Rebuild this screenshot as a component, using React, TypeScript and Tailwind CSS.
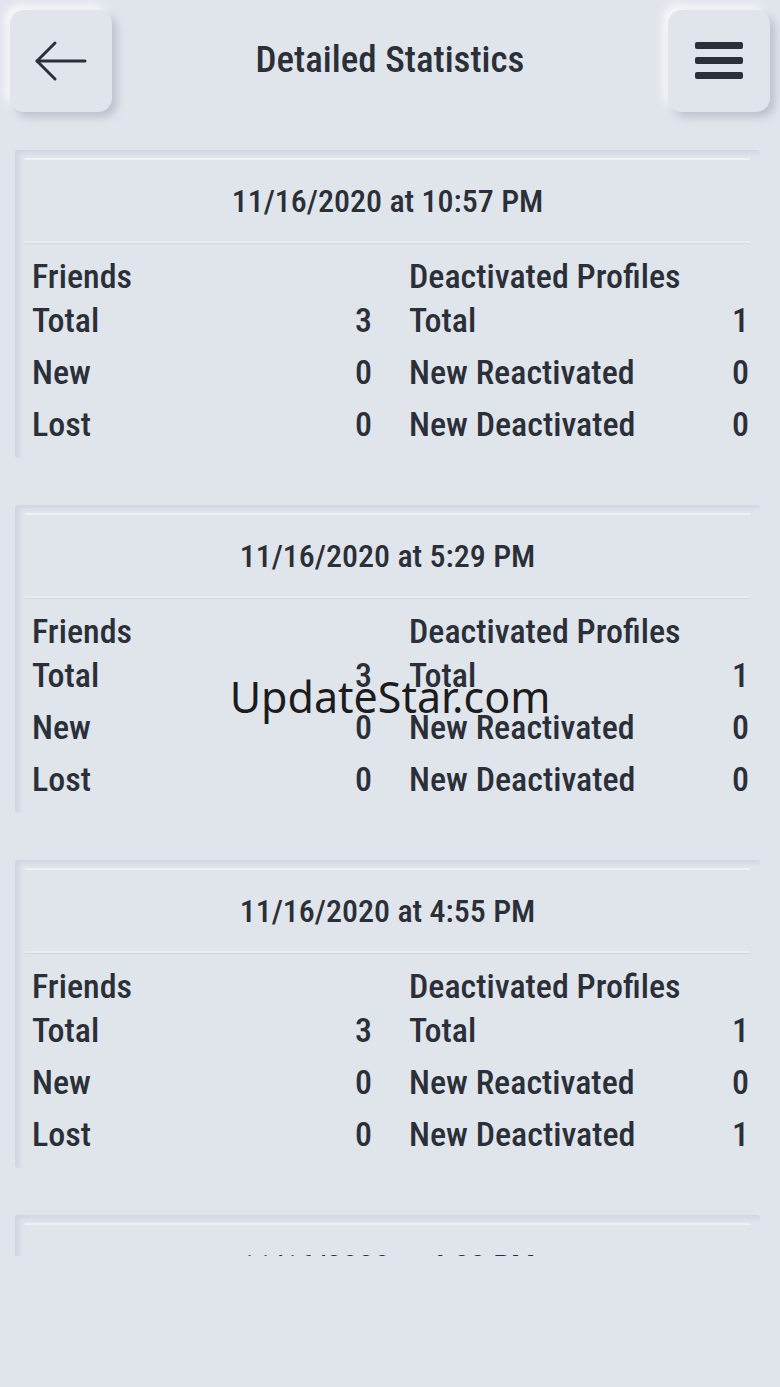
type Stat = { label: string; value: number };

type Entry = {
  date: string;
  friends: Stat[];
  deactivated: Stat[];
};

const entries: Entry[] = [
  {
    date: '11/16/2020 at 10:57 PM',
    friends: [
      { label: 'Total', value: 3 },
      { label: 'New', value: 0 },
      { label: 'Lost', value: 0 },
    ],
    deactivated: [
      { label: 'Total', value: 1 },
      { label: 'New Reactivated', value: 0 },
      { label: 'New Deactivated', value: 0 },
    ],
  },
  {
    date: '11/16/2020 at 5:29 PM',
    friends: [
      { label: 'Total', value: 3 },
      { label: 'New', value: 0 },
      { label: 'Lost', value: 0 },
    ],
    deactivated: [
      { label: 'Total', value: 1 },
      { label: 'New Reactivated', value: 0 },
      { label: 'New Deactivated', value: 0 },
    ],
  },
  {
    date: '11/16/2020 at 4:55 PM',
    friends: [
      { label: 'Total', value: 3 },
      { label: 'New', value: 0 },
      { label: 'Lost', value: 0 },
    ],
    deactivated: [
      { label: 'Total', value: 1 },
      { label: 'New Reactivated', value: 0 },
      { label: 'New Deactivated', value: 1 },
    ],
  },
  {
    date: '11/16/2020 at 4:22 PM',
    friends: [
      { label: 'Total', value: 3 },
      { label: 'New', value: 0 },
      { label: 'Lost', value: 0 },
    ],
    deactivated: [
      { label: 'Total', value: 1 },
      { label: 'New Reactivated', value: 0 },
      { label: 'New Deactivated', value: 0 },
    ],
  },
];

const StatColumn = ({ title, stats }: { title: string; stats: Stat[] }) => (
  <div className="flex flex-col">
    <div className="h-[36px] leading-[36px]">{title}</div>
    {stats.map((s) => (
      <div key={s.label} className="flex justify-between h-[52px] leading-[52px]">
        <span>{s.label}</span>
        <span>{s.value}</span>
      </div>
    ))}
  </div>
);

const StatCard = ({ entry }: { entry: Entry }) => (
  <div className="ml-[15px] mr-[20px] mb-[47px] pt-[8px] pb-[8px] rounded-[3px] shadow-[inset_4px_3px_5px_#cfd5de]">
    <div className="mx-[10px] h-[85px] flex items-center justify-center text-[32px] border-t-2 border-[#eef1f5] border-b-2 border-b-[#e9edf2] shadow-[0_1px_0_#d3d9e1]">
      {entry.date}
    </div>
    <div className="mt-[15px] pl-[17px] pr-[11px] grid grid-cols-2 gap-x-[37px] text-[34px]">
      <StatColumn title="Friends" stats={entry.friends} />
      <StatColumn title="Deactivated Profiles" stats={entry.deactivated} />
    </div>
  </div>
);

export default function App() {
  return (
    <div className="relative w-[780px] h-[1387px] bg-[#e0e5ec] text-[#2b2f38] font-['Roboto',sans-serif] font-stretch-condensed font-medium overflow-hidden">
      <div className="h-[148px] px-[10px] pt-[10px] flex justify-between items-start">
        <button className="w-[102px] h-[102px] rounded-[14px] bg-[#e0e5ec] shadow-[5px_5px_9px_#bcc2cb,-5px_-5px_9px_#f7f9fb] flex items-center justify-center">
          <svg width="60" height="48" viewBox="0 0 60 48" fill="none" stroke="#2b2f38" strokeWidth="3" strokeLinecap="round" strokeLinejoin="round">
            <path d="M6 24H54" />
            <path d="M24 6L6 24L24 42" />
          </svg>
        </button>
        <h1 className="mt-[23px] text-[37px] leading-[54px]">Detailed Statistics</h1>
        <button className="w-[102px] h-[102px] rounded-[14px] bg-[#e0e5ec] shadow-[5px_5px_9px_#bcc2cb,-5px_-5px_9px_#f7f9fb] flex items-center justify-center">
          <svg width="48" height="38" viewBox="0 0 48 38" fill="#2b2f38">
            <rect x="0" y="0" width="48" height="7" rx="2" />
            <rect x="0" y="15" width="48" height="7" rx="2" />
            <rect x="0" y="30" width="48" height="7" rx="2" />
          </svg>
        </button>
      </div>

      <div className="h-[1108px] pt-[2px] overflow-hidden">
        {entries.map((e, i) => (
          <StatCard key={i} entry={e} />
        ))}
      </div>

      <div className="absolute left-0 right-0 top-[670px] text-center font-['Noto_Sans',sans-serif] font-normal font-stretch-normal text-[43px] leading-[54px] text-[#1c1c1c] pointer-events-none">
        UpdateStar.com
      </div>
    </div>
  );
}
